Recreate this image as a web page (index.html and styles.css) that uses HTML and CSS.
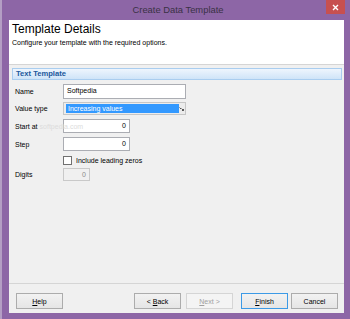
FILE: index.html
```html
<!DOCTYPE html>
<html>
<head>
<meta charset="utf-8">
<link rel="stylesheet" href="styles.css">
</head>
<body>
<div class="window">
  <div class="titlebar">
    <span></span>
    <span class="title">Create Data Template</span>
    <span class="close">
      <svg width="7" height="7" viewBox="0 0 7 7"><path d="M1 1 L6 6 M6 1 L1 6" stroke="#fff" stroke-width="1.4"/></svg>
    </span>
  </div>
  <div class="content">
    <div class="header">
      <div class="h-title">Template Details</div>
      <div class="h-sub">Configure your template with the required options.</div>
    </div>
    <div class="main">
      <div class="group">Text Template</div>
      <div class="form">
        <div class="row r-name">
          <span class="label">Name</span>
          <div class="input wide">Softpedia</div>
        </div>
        <div class="row r-type">
          <span class="label">Value type</span>
          <div class="combo">
            <span class="sel">Increasing values</span>
            <span class="arrow">
              <svg width="5" height="5" viewBox="0 0 5 5"><path d="M0.5 1.5 L2 3 M2.5 2.5 L4.5 4.5 M3 4.5 L4.5 4.5 L4.5 3" stroke="#444" stroke-width="0.9" fill="none"/></svg>
            </span>
          </div>
        </div>
        <div class="row r-start">
          <span class="label">Start at<span class="wm">softpedia.com</span></span>
          <div class="input num">0</div>
        </div>
        <div class="row r-step">
          <span class="label">Step</span>
          <div class="input num">0</div>
        </div>
        <div class="row r-check">
          <span class="label"></span>
          <span class="cb"></span>
          <span class="cb-label">Include leading zeros</span>
        </div>
        <div class="row r-digits">
          <span class="label">Digits</span>
          <div class="input small disabled">0</div>
        </div>
      </div>
    </div>
    <div class="footer">
      <button class="btn help"><u>H</u>elp</button>
      <span class="spacer"></span>
      <button class="btn">&lt; <u>B</u>ack</button>
      <button class="btn next" disabled><u>N</u>ext &gt;</button>
      <button class="btn finish"><u>F</u>inish</button>
      <button class="btn cancel">Cancel</button>
    </div>
  </div>
</div>
</body>
</html>
```

FILE: styles.css
```css
html, body {
  margin: 0;
  padding: 0;
  background: #8d66a6;
}
* { box-sizing: border-box; }

.window {
  width: 350px;
  height: 319px;
  background: #8d66a6;
  border-left: 2px solid #b49ec4;
  padding: 0 6px 6px 7px;
  display: flex;
  flex-direction: column;
  font-family: "Liberation Sans", Arial, sans-serif;
  color: #000;
}

.titlebar {
  height: 20px;
  display: grid;
  grid-template-columns: 1fr auto 1fr;
  align-items: start;
}
.title {
  font-size: 9.4px;
  line-height: 20px;
  color: #3a3145;
  padding-left: 3px;
}
.close {
  justify-self: end;
  margin-right: -1px;
  width: 19px;
  height: 14px;
  background: #c75050;
  display: flex;
  align-items: center;
  justify-content: center;
}

.content {
  flex: 1;
  display: flex;
  flex-direction: column;
  background: #f0f0f0;
}

.header {
  height: 45px;
  background: #fff;
  border-bottom: 1px solid #d5d5d5;
  padding: 2px 3px 0;
}
.h-title {
  font-size: 12px;
  line-height: 14px;
}
.h-sub {
  margin-top: 2px;
  font-size: 7px;
  line-height: 9px;
}

.main {
  flex: 1;
  padding: 3px 2px 0 3px;
}
.group {
  height: 12px;
  border: 1px solid #a9cdef;
  background: linear-gradient(#eef5fd, #cfe4f8);
  color: #21589c;
  font-weight: bold;
  font-size: 7.6px;
  line-height: 10px;
  padding-left: 3px;
}

.form {
  padding-left: 3px;
  font-size: 7px;
}
.row {
  display: flex;
  align-items: center;
}
.label {
  width: 48px;
  flex: none;
  position: relative;
  white-space: nowrap;
}
.wm {
  color: #dcdcdc;
  margin-left: 2px;
}
.r-name { margin-top: 4px; height: 15px; }
.r-type { margin-top: 3px; height: 13px; }
.r-start { margin-top: 4px; height: 14px; }
.r-step { margin-top: 4px; height: 14px; }
.r-check { margin-top: 3px; height: 12px; }
.r-digits { margin-top: 2px; height: 13px; }

.input {
  height: 100%;
  border: 1px solid #abadb3;
  background: #fff;
  line-height: 12px;
  padding: 0 3px;
}
.wide { width: 123px; }
.num { width: 67px; text-align: right; }
.small { width: 27px; text-align: right; }
.disabled {
  background: #f0f0f0;
  border-color: #c9c9c9;
  color: #8a8a8a;
}

.combo {
  width: 123px;
  height: 100%;
  border: 1px solid #c6c6c6;
  background: #ececec;
  display: flex;
  align-items: center;
  padding: 1px;
}
.sel {
  width: 113px;
  height: 9px;
  margin-left: 1px;
  background: #3399ff;
  color: #fff;
  line-height: 9px;
  padding-left: 2px;
}
.arrow {
  flex: 1;
  display: flex;
  justify-content: center;
  align-items: center;
}

.cb {
  width: 9px;
  height: 9px;
  border: 1px solid #707070;
  background: #fff;
  flex: none;
}
.cb-label {
  margin-left: 4px;
}

.footer {
  height: 30px;
  border-top: 1px solid #d5d5d5;
  display: flex;
  align-items: flex-start;
  padding: 9px 6px 0 7px;
}
.spacer { flex: 1; }
.btn {
  width: 47px;
  height: 16px;
  margin: 0 0 0 0;
  border: 1px solid #acacac;
  background: linear-gradient(#f2f2f2, #e5e5e5);
  font-family: "Liberation Sans", Arial, sans-serif;
  font-size: 7px;
  color: #000;
  padding: 0;
  border-radius: 0;
}
.btn + .btn { margin-left: 5px; }
.btn.finish { margin-left: 8px; border-color: #3c9ae6; }
.btn.cancel { margin-left: 3px; }
.btn.next {
  color: #a0a0a0;
  border-color: #d5d5d5;
  background: #f4f4f4;
}
```
